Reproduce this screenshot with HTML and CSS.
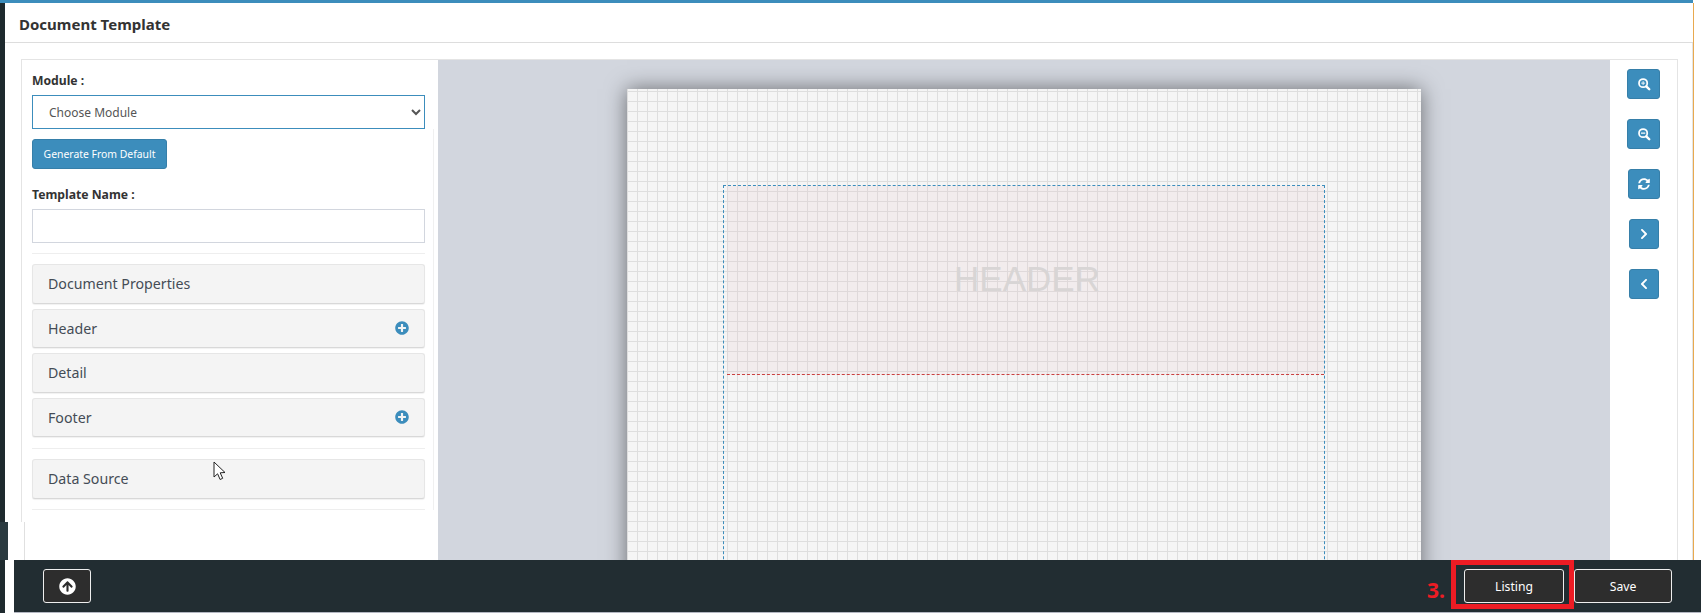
FILE: index.html
```html
<!DOCTYPE html>
<html lang="en">
<head>
    <meta charset="UTF-8">
    <title>Document Template</title>
    <link rel="stylesheet" href="styles.css">
</head>
<body>
    <div class="topline"></div>
    <div class="app">
        <div class="rail"></div>
        <div class="main">
            <div class="page-title">Document Template</div>
            <div class="page-body">
                <div class="editor">
                    <div class="side">
                        <div class="side-top">
                            <label class="field-label">Module :</label>
                            <select class="module-select">
                                <option>Choose Module</option>
                            </select>
                        </div>
                        <div class="side-lower">
                            <button class="btn-blue">Generate From Default</button>
                            <label class="field-label name-label">Template Name :</label>
                            <input class="name-input" type="text">
                            <hr class="divider">
                            <div class="acc-item">Document Properties</div>
                            <div class="acc-item">
                                Header
                                <svg class="plus-icon" viewBox="0 0 512 512"><path d="M256 8C119 8 8 119 8 256s111 248 248 248 248-111 248-248S393 8 256 8zm144 276c0 6.6-5.4 12-12 12h-92v92c0 6.6-5.4 12-12 12h-56c-6.6 0-12-5.4-12-12v-92h-92c-6.6 0-12-5.4-12-12v-56c0-6.6 5.4-12 12-12h92v-92c0-6.6 5.4-12 12-12h56c6.6 0 12 5.4 12 12v92h92c6.6 0 12 5.4 12 12v56z"/></svg>
                            </div>
                            <div class="acc-item">Detail</div>
                            <div class="acc-item">
                                Footer
                                <svg class="plus-icon" viewBox="0 0 512 512"><path d="M256 8C119 8 8 119 8 256s111 248 248 248 248-111 248-248S393 8 256 8zm144 276c0 6.6-5.4 12-12 12h-92v92c0 6.6-5.4 12-12 12h-56c-6.6 0-12-5.4-12-12v-92h-92c-6.6 0-12-5.4-12-12v-56c0-6.6 5.4-12 12-12h92v-92c0-6.6 5.4-12 12-12h56c6.6 0 12 5.4 12 12v92h92c6.6 0 12 5.4 12 12v56z"/></svg>
                            </div>
                            <hr class="divider divider-mid">
                            <div class="acc-item">Data Source</div>
                            <hr class="divider">
                        </div>
                    </div>

                    <div class="canvas">
                        <div class="sheet">
                            <div class="margins">
                                <div class="band">HEADER</div>
                            </div>
                        </div>
                    </div>

                    <div class="tools">
                        <button class="tool tool-wide">
                            <svg class="icon-search" viewBox="0 0 16 16" fill="none" stroke="#fff"><circle cx="7" cy="7" r="4.7" stroke-width="2"/><path d="M10.6 10.6L14 14" stroke-width="2.8" stroke-linecap="round"/><path d="M7 4.8v4.4M4.8 7h4.4" stroke-width="1"/></svg>
                        </button>
                        <button class="tool tool-wide">
                            <svg class="icon-search" viewBox="0 0 16 16" fill="none" stroke="#fff"><circle cx="7" cy="7" r="4.7" stroke-width="2"/><path d="M10.6 10.6L14 14" stroke-width="2.8" stroke-linecap="round"/><path d="M4.6 7h4.8" stroke-width="1.4"/></svg>
                        </button>
                        <button class="tool tool-mid">
                            <svg viewBox="0 0 512 512"><path fill="#fff" d="M370.72 133.28C339.458 104.008 298.888 87.962 255.848 88c-77.458.068-144.328 53.178-162.791 126.85-1.344 5.363-6.122 9.15-11.651 9.15H24.103c-7.498 0-13.194-6.807-11.807-14.176C33.933 94.924 134.813 8 256 8c66.448 0 126.791 26.136 171.315 68.685L463.03 40.97C478.149 25.851 504 36.559 504 57.941V192c0 13.255-10.745 24-24 24H345.941c-21.382 0-32.09-25.851-16.971-40.971l41.75-41.749zM32 296h134.059c21.382 0 32.09 25.851 16.971 40.971l-41.75 41.75c31.262 29.273 71.835 45.319 114.876 45.28 77.418-.07 144.315-53.144 162.787-126.849 1.344-5.363 6.122-9.15 11.651-9.15h57.304c7.498 0 13.194 6.807 11.807 14.176C478.067 417.076 377.187 504 256 504c-66.448 0-126.791-26.136-171.315-68.685L48.97 471.03C33.851 486.149 8 475.441 8 454.059V320c0-13.255 10.745-24 24-24z"/></svg>
                        </button>
                        <button class="tool">
                            <svg viewBox="0 0 320 512"><path fill="#fff" d="M285.476 272.971L91.132 467.314c-9.373 9.373-24.569 9.373-33.941 0l-22.667-22.667c-9.357-9.357-9.375-24.522-.04-33.901L188.505 256 34.484 101.255c-9.335-9.379-9.317-24.544.04-33.901l22.667-22.667c9.373-9.373 24.569-9.373 33.941 0L285.475 239.03c9.373 9.372 9.373 24.568.001 33.941z"/></svg>
                        </button>
                        <button class="tool">
                            <svg viewBox="0 0 320 512"><path fill="#fff" d="M34.52 239.03L228.87 44.69c9.37-9.37 24.57-9.37 33.94 0l22.67 22.67c9.36 9.36 9.37 24.52.04 33.9L131.49 256l154.02 154.75c9.34 9.38 9.32 24.54-.04 33.9l-22.67 22.67c-9.37 9.37-24.57 9.37-33.94 0L34.52 272.97c-9.37-9.37-9.37-24.57 0-33.94z"/></svg>
                        </button>
                    </div>
                </div>
            </div>
        </div>
    </div>

    <!-- part of the window below the first capture -->
    <div class="lower-strip"></div>

    <svg class="cursor" viewBox="0 0 13 20"><path d="M1 1v15l3.6-3.2 2.5 5.7 2.6-1.2-2.5-5.5 4.8-.3z" fill="#fff" stroke="#222" stroke-width="1"/></svg>

    <div class="footer-bar">
        <button class="btn-dark btn-up">
            <svg viewBox="0 0 512 512"><path fill="#fff" d="M8 256C8 119 119 8 256 8s248 111 248 248-111 248-248 248S8 393 8 256zm143.6 28.9l72.4-75.5V392c0 13.3 10.7 24 24 24h16c13.3 0 24-10.7 24-24V209.4l72.4 75.5c9.3 9.7 24.8 9.9 34.3.4l10.9-11c9.4-9.4 9.4-24.6 0-33.9L273 107.7c-9.4-9.4-24.6-9.4-33.9 0L106.3 240.4c-9.4 9.4-9.4 24.6 0 33.9l10.9 11c9.6 9.5 25.1 9.3 34.4-.4z"/></svg>
        </button>
        <div class="footer-right">
            <span class="step-no">3.</span>
            <div class="red-box">
                <button class="btn-dark btn-listing">Listing</button>
            </div>
            <button class="btn-dark btn-save">Save</button>
        </div>
    </div>
</body>
</html>
```

FILE: styles.css
```css
html, body {
    margin: 0;
    height: 613px;
    overflow: hidden;
}
body {
    position: relative;
    background: #fff;
    font-family: "Noto Sans", sans-serif;
    color: #333;
}
.topline {
    width: 1693px;
    height: 3px;
    background: #3c8dbc;
}
.app {
    display: flex;
    height: 610px;
}
.rail {
    width: 5px;
    background: #1e2a2e;
}
.main {
    width: 1689px;
    border-right: 1px solid #e8a94f;
    box-sizing: border-box;
}
.page-title {
    height: 35px;
    line-height: 35px;
    padding: 4px 0 0 14px;
    font-size: 15px;
    font-weight: 700;
    color: #333;
    border-bottom: 1px solid #ddd;
}
.page-body {
    height: 570px;
    padding: 16px 0 0 16px;
    border-right: 1px solid #e4e4e4;
    box-sizing: border-box;
}
.editor {
    display: flex;
    height: 560px;
    width: 1657px;
    border: 1px solid #e4e4e4;
    border-bottom: 0;
    box-sizing: border-box;
}

/* left form */
.side {
    width: 416px;
    flex-shrink: 0;
}
.side-top {
    padding: 12px 13px 0 10px;
}
.side-lower {
    margin-right: 4px;
    padding: 10px 8px 0 10px;
    border-right: 1px solid #f0f0f0;
}
.field-label {
    display: block;
    font-size: 12.2px;
    line-height: 18px;
    font-weight: 700;
    color: #333;
    margin-bottom: 5px;
}
.module-select {
    display: block;
    width: 100%;
    height: 34px;
    padding-left: 12px;
    border: 1px solid #3c8dbc;
    border-radius: 0;
    background: #fff;
    color: #555;
    font-family: inherit;
    font-size: 12px;
}
.btn-blue {
    display: block;
    width: 135px;
    height: 30px;
    padding: 0;
    background: #3c8dbc;
    border: 1px solid #367fa9;
    border-radius: 3px;
    color: #fff;
    font-family: inherit;
    font-size: 10.4px;
}
.name-label {
    margin-top: 17px;
    margin-bottom: 5px;
}
.name-input {
    display: block;
    width: 100%;
    height: 34px;
    box-sizing: border-box;
    border: 1px solid #d2d6de;
    background: #fff;
}
.divider {
    border: 0;
    height: 1px;
    background: #eee;
    margin: 10px 0;
}
.divider-mid {
    margin-top: 11px;
}
.acc-item {
    display: flex;
    align-items: center;
    justify-content: space-between;
    height: 39.5px;
    margin-top: 5px;
    padding: 0 15px;
    box-sizing: border-box;
    background: #f4f4f4;
    border: 1px solid #e6e6e6;
    border-bottom-color: #d8d8d8;
    border-radius: 3px;
    box-shadow: 0 1px 1px rgba(0,0,0,0.06);
    font-size: 14.2px;
    color: #444c56;
}
.divider + .acc-item {
    margin-top: 0;
}
.plus-icon {
    width: 14px;
    height: 14px;
    fill: #3c8dbc;
}

/* page preview */
.canvas {
    flex: 1;
    overflow: hidden;
    background: #d2d6de;
}
.sheet {
    width: 794px;
    height: 900px;
    margin: 29px 0 0 189px;
    background-color: #f5f5f5;
    background-image:
        linear-gradient(to right, #dedede 1px, transparent 1px),
        linear-gradient(to bottom, #dedede 1px, transparent 1px);
    background-size: 10px 10px;
    background-position: 0 2px;
    box-shadow: 0 0 20px rgba(0,0,0,0.5);
    padding-top: 96px;
    box-sizing: border-box;
}
.margins {
    width: 602px;
    height: 600px;
    margin-left: 96px;
    border: 1px dashed #3c8dbc;
    box-sizing: border-box;
}
.band {
    display: flex;
    align-items: center;
    justify-content: center;
    height: 189px;
    margin-left: 3px;
    padding: 0 0 2px 3px;
    box-sizing: border-box;
    background: rgba(225,190,195,0.15);
    border-bottom: 1px dashed #c9403f;
    font-family: "Liberation Sans", Arial, sans-serif;
    font-size: 35px;
    color: #d8d5d5;
}

/* zoom tools */
.tools {
    width: 67px;
    flex-shrink: 0;
    display: flex;
    flex-direction: column;
    align-items: center;
    gap: 20px;
    padding-top: 9px;
    box-sizing: border-box;
}
.tool {
    width: 30px;
    height: 30px;
    padding: 0;
    display: flex;
    align-items: center;
    justify-content: center;
    background: #3c8dbc;
    border: 1px solid #367fa9;
    border-radius: 3px;
}
.tool svg {
    width: 12px;
    height: 12px;
}
.tool .icon-search {
    width: 14px;
    height: 14px;
}
.tool-wide { width: 33px; }
.tool-mid { width: 32px; }

.lower-strip {
    position: absolute;
    left: 0;
    top: 522px;
    width: 16px;
    height: 38px;
    background: #fff;
    border-left: 8px solid #2a3a40;
    border-right: 1px solid #e0e0e0;
}
.cursor {
    position: absolute;
    left: 213px;
    top: 461px;
    width: 13px;
    height: 20px;
}

/* bottom action bar */
.footer-bar {
    position: absolute;
    left: 14px;
    right: 0;
    top: 560px;
    height: 53px;
    display: flex;
    justify-content: space-between;
    align-items: flex-start;
    padding: 0 29px;
    box-sizing: border-box;
    background: #222d32;
    border-bottom: 1px solid #b4b7c2;
}
.btn-dark {
    height: 34px;
    padding: 0;
    background: #2d2d2d;
    border: 1px solid #eee;
    border-radius: 3px;
    color: #fff;
    font-family: inherit;
    font-size: 12.2px;
}
.btn-up {
    width: 48px;
    margin-top: 9px;
    display: flex;
    align-items: center;
    justify-content: center;
}
.btn-up svg {
    width: 17px;
    height: 17px;
}
.footer-right {
    display: flex;
    align-items: flex-start;
}
.step-no {
    margin: 16px 6px 0 0;
    font-size: 21px;
    line-height: 28px;
    font-weight: 700;
    color: #ed1c24;
}
.red-box {
    padding: 4px 5px 1px 8px;
    border: 5px solid #ed1c24;
}
.btn-listing { display: block; width: 100px; }
.btn-save {
    width: 98px;
    margin-top: 9px;
}
```
